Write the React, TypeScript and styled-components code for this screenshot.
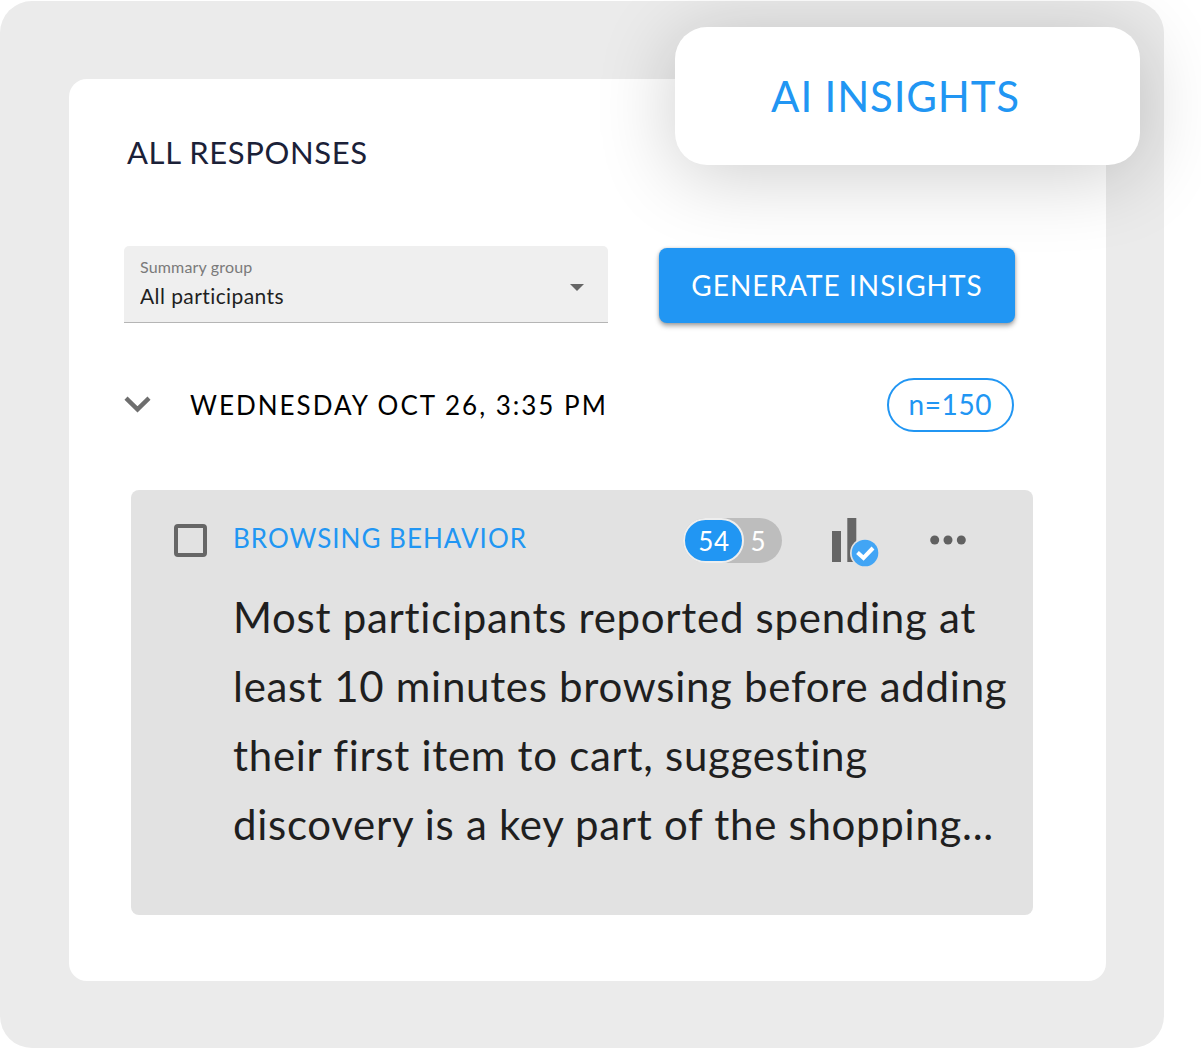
import React from "react";
import styled, { createGlobalStyle } from "styled-components";

const BLUE = "#2196f3";
const GREY = "#666666";

const GlobalStyle = createGlobalStyle`
  *, *::before, *::after { box-sizing: border-box; }
  body {
    margin: 0;
    background: #ffffff;
    font-family: Lato, "Open Sans", sans-serif;
  }
  h1, h2, h3, p { margin: 0; font-weight: 400; }
  button, select, input { font-family: inherit; margin: 0; }
`;

const Page = styled.main`
  position: relative;
  padding: 1px 37px 0 0;
  overflow: hidden;
`;

const Backdrop = styled.div`
  padding: 78px 58px 67px 69px;
  border-radius: 32px;
  background: #ebebeb;
`;

const Card = styled.section`
  padding: 53px 0 66px;
  border-radius: 18px;
  background: #ffffff;
`;

const FloatingLabel = styled.div`
  position: absolute;
  top: 27px;
  right: 61px;
  width: 465px;
  padding: 34px 24px 34px 0;
  border-radius: 32px;
  background: #ffffff;
  box-shadow: 0 10px 80px rgba(0, 0, 0, 0.2);
  color: ${BLUE};
  text-align: center;
`;

const FloatingTitle = styled.h1`
  font-size: 42px;
  line-height: 70px;
  letter-spacing: 0.02em;
`;

const CardTitle = styled.h2`
  padding: 0 58px;
  color: #1b2138;
  font-size: 31px;
  line-height: 40px;
  letter-spacing: 0.02em;
`;

const Controls = styled.div`
  position: relative;
  z-index: 1;
  display: flex;
  align-items: flex-end;
  gap: 51px;
  margin: 74px 91px 0 55px;
`;

const SelectField = styled.div`
  position: relative;
  flex: 1;
  display: flex;
  flex-direction: column;
  gap: 4px;
  padding: 11px 16px;
  border-bottom: 1px solid #b5b5b5;
  border-radius: 5px 5px 0 0;
  background: #efefef;
`;

const FieldLabel = styled.label`
  color: #7a7a7a;
  font-size: 16px;
  line-height: 20px;
  letter-spacing: 0.01em;
`;

const Select = styled.select`
  appearance: none;
  width: 100%;
  height: 30px;
  padding: 0;
  border: 0;
  background: transparent;
  color: #1f1f1f;
  font-size: 21px;
  line-height: 30px;
  letter-spacing: 0.02em;
`;

const SelectArrow = styled.svg`
  position: absolute;
  top: 38px;
  right: 24px;
  width: 14px;
  height: 7px;
  fill: ${GREY};
  pointer-events: none;
`;

const PrimaryButton = styled.button`
  height: 75px;
  width: 356px;
  padding: 0 0 2px;
  border: 0;
  border-radius: 8px;
  background: ${BLUE};
  box-shadow: 0 3px 5px rgba(0, 0, 0, 0.35), 0 0 3px rgba(0, 0, 0, 0.15);
  color: #ffffff;
  font-size: 28px;
  line-height: 40px;
  letter-spacing: 1px;
`;

const RunHeader = styled.header`
  display: flex;
  align-items: center;
  margin: 55px 92px 0 55px;
`;

const IconButton = styled.button`
  display: flex;
  padding: 0 0 2px;
  border: 0;
  background: transparent;
`;

const RunDate = styled.h3`
  flex: 1;
  margin-left: 39px;
  color: #000000;
  font-size: 26px;
  line-height: 40px;
  letter-spacing: 2px;
`;

const SampleSize = styled.span`
  padding: 4px 20px 6px;
  border: 2px solid ${BLUE};
  border-radius: 28px;
  color: ${BLUE};
  font-size: 28px;
  line-height: 40px;
  letter-spacing: 0.02em;
`;

const Insight = styled.article`
  display: flex;
  gap: 26px;
  margin: 58px 73px 0 62px;
  padding: 28px 16px 56px 43px;
  border-radius: 8px;
  background: #e2e2e2;
`;

const Checkbox = styled.input`
  appearance: none;
  flex: none;
  width: 33px;
  height: 33px;
  margin: 6px 0 0;
  border: 4px solid ${GREY};
  border-radius: 4px;

  &:checked { background: ${BLUE}; }
`;

const InsightBody = styled.div`
  flex: 1;
`;

const InsightHeader = styled.div`
  display: flex;
  align-items: center;
  height: 45px;
  padding-right: 51px;
`;

const InsightTitle = styled.label`
  flex: 1;
  padding-bottom: 6px;
  color: ${BLUE};
  font-size: 26px;
  line-height: 40px;
  letter-spacing: 1px;
`;

const Counts = styled.div`
  display: flex;
  align-items: center;
  height: 45px;
  padding-right: 16px;
  border-radius: 24px;
  background: #bdbdbd;
  color: #ffffff;
  font-size: 26px;
  line-height: 40px;
  letter-spacing: 0.02em;
`;

const CountMain = styled.span`
  display: flex;
  align-items: center;
  justify-content: center;
  width: 61px;
  height: 45px;
  margin-right: 6px;
  border: 2px solid #eeeeee;
  border-radius: 24px;
  background: ${BLUE};
`;

const ChartButton = styled(IconButton)`
  margin: 6px 51px 0 49px;
`;

const InsightText = styled.p`
  margin-top: 20px;
  color: #1f1f1f;
  font-size: 42px;
  line-height: 69px;
  letter-spacing: 0.017em;
`;

function ChevronIcon() {
  return (
    <svg width="27" height="17" viewBox="0 0 27 17" fill="none" stroke="#6e6e6e" strokeWidth="4.4">
      <path d="M2 2.2 13.5 13.4 25 2.2" />
    </svg>
  );
}

function ChartCheckIcon() {
  return (
    <svg width="48" height="49" viewBox="0 0 48 49">
      <path d="M1 13h9v31H1zM16.300 0h9v44h-9z" fill={GREY} />
      <circle cx="34" cy="35" r="15" fill="#e2e2e2" />
      <circle cx="34" cy="35" r="13.300" fill="#42a5f5" />
      <path d="m26.500 34.500 6 5.500 9.500-10" fill="none" stroke="#fff" strokeWidth="4" />
    </svg>
  );
}

function MoreIcon() {
  return (
    <svg width="36" height="10" viewBox="0 0 36 10" fill="#616161">
      <circle cx="4.700" cy="5" r="4.500" />
      <circle cx="18" cy="5" r="4.500" />
      <circle cx="31.300" cy="5" r="4.500" />
    </svg>
  );
}

export default function App() {
  return (
    <>
      <GlobalStyle />
      <Page>
        <Backdrop>
          <Card>
            <CardTitle>ALL RESPONSES</CardTitle>
            <Controls>
              <SelectField>
                <FieldLabel htmlFor="group">Summary group</FieldLabel>
                <Select id="group" defaultValue="all">
                  <option value="all">All participants</option>
                </Select>
                <SelectArrow viewBox="0 0 14 7">
                  <path d="M0 0h14L7 7z" />
                </SelectArrow>
              </SelectField>
              <PrimaryButton type="button">GENERATE INSIGHTS</PrimaryButton>
            </Controls>
            <RunHeader>
              <IconButton type="button" aria-label="Collapse" aria-expanded="true">
                <ChevronIcon />
              </IconButton>
              <RunDate>WEDNESDAY OCT 26, 3:35 PM</RunDate>
              <SampleSize>n=150</SampleSize>
            </RunHeader>
            <Insight>
              <Checkbox type="checkbox" id="browsing" />
              <InsightBody>
                <InsightHeader>
                  <InsightTitle htmlFor="browsing">BROWSING BEHAVIOR</InsightTitle>
                  <Counts>
                    <CountMain>54</CountMain>
                    <span>5</span>
                  </Counts>
                  <ChartButton type="button" aria-label="Chart">
                    <ChartCheckIcon />
                  </ChartButton>
                  <IconButton type="button" aria-label="More">
                    <MoreIcon />
                  </IconButton>
                </InsightHeader>
                <InsightText>
                  Most participants reported spending at least 10 minutes browsing before adding
                  their first item to cart, suggesting discovery is a key part of the shopping...
                </InsightText>
              </InsightBody>
            </Insight>
          </Card>
        </Backdrop>
        <FloatingLabel>
          <FloatingTitle>AI INSIGHTS</FloatingTitle>
        </FloatingLabel>
      </Page>
    </>
  );
}
